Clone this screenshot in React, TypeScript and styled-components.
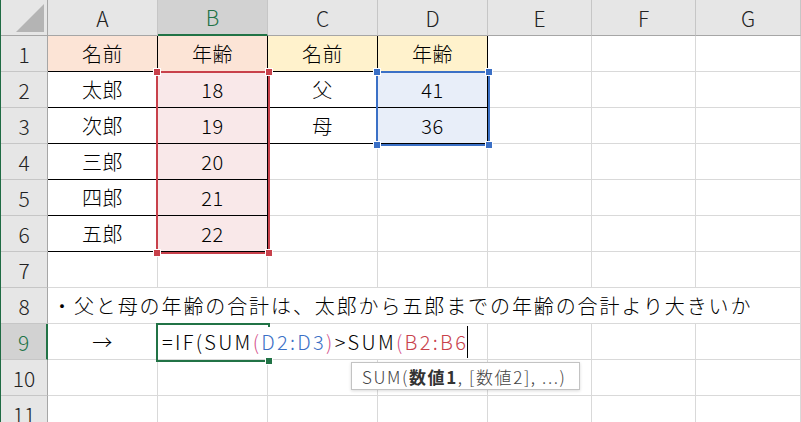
import React from 'react';
import styled, { createGlobalStyle, css } from 'styled-components';

const GREEN = '#217346';
const GRID = '#d9d9d9';
const RED = '#c8414b';
const BLUE = '#3b70c6';
const PAREN = '#d4508a';

const GlobalStyle = createGlobalStyle`
  html, body {
    margin: 0;
    padding: 0;
    background: #ffffff;
    overflow: hidden;
  }
  body {
    font-family: "Noto Sans CJK JP", "Noto Sans", sans-serif;
    font-weight: 300;
    color: #000;
  }
  * { box-sizing: border-box; }
`;

const Page = styled.div`
  position: relative;
  width: 801px;
  height: 422px;
  overflow: hidden;
  border-left: 1px solid #1f6b43;
`;

const Sheet = styled.div`
  display: grid;
  grid-template-columns: 47px 110px 110px 110px 110px 104px 104px 105px;
  grid-template-rows: repeat(12, 36px);
`;

// every item is placed on the grid by row / column so the overlays don't push cells around
type Place = { $r: number | string; $c: number | string };
const place = css<Place>`
  grid-row: ${(p) => p.$r};
  grid-column: ${(p) => p.$c};
`;

const Corner = styled.div`
  grid-column: 1;
  grid-row: 1;
  background: #e6e6e6;
  border-right: 1px solid #a6a6a6;
  border-bottom: 1px solid #a6a6a6;
`;

const ColHeader = styled.div<Place & { $active?: boolean }>`
  ${place}
  display: flex;
  align-items: center;
  justify-content: center;
  background: #e6e6e6;
  border-right: 1px solid #c6c6c6;
  border-bottom: 1px solid #a6a6a6;
  font-size: 21px;
  color: #222;
  ${(p) =>
    p.$active &&
    css`
      background: #d2d2d2;
      color: ${GREEN};
      border-bottom: 2px solid ${GREEN};
    `}
`;

const RowHeader = styled.div<Place & { $active?: boolean }>`
  ${place}
  display: flex;
  align-items: center;
  justify-content: center;
  background: #e6e6e6;
  border-right: 1px solid #a6a6a6;
  border-bottom: 1px solid #c6c6c6;
  font-size: 21px;
  color: #222;
  ${(p) =>
    p.$active &&
    css`
      background: #d2d2d2;
      color: ${GREEN};
      border-right: 2px solid ${GREEN};
    `}
`;

const Cell = styled.div<Place & { $fill?: string; $boxed?: boolean }>`
  ${place}
  display: flex;
  align-items: center;
  justify-content: center;
  font-size: 20px;
  letter-spacing: 0.5px;
  background: ${(p) => p.$fill || '#fff'};
  border-right: 1px solid ${(p) => (p.$boxed ? '#000' : GRID)};
  border-bottom: 1px solid ${(p) => (p.$boxed ? '#000' : GRID)};
  white-space: nowrap;
`;

const NoteCell = styled(Cell)`
  justify-content: flex-start;
  padding-left: 4px;
  letter-spacing: 1.9px;
`;

const EditCell = styled(Cell)`
  justify-content: flex-start;
  padding-left: 4px;
  letter-spacing: 2.3px;
`;

const Ref = styled.span<{ $color: string }>`
  color: ${(p) => p.$color};
`;

const Caret = styled.span`
  display: inline-block;
  width: 1px;
  height: 32px;
  margin-left: -1px;
  background: #000;
  vertical-align: middle;
`;

const RangeBox = styled.div<Place & { $color: string }>`
  ${place}
  margin: -1px -2px -2px -2px;
  border: 2px solid ${(p) => p.$color};
  position: relative;
  z-index: 2;
  pointer-events: none;
`;

const Handle = styled.span<{ $color: string; $top?: boolean; $left?: boolean }>`
  position: absolute;
  width: 6px;
  height: 6px;
  background: ${(p) => p.$color};
  box-shadow: 0 0 0 1px #fff;
  ${(p) => (p.$top ? 'top: -4px;' : 'bottom: -4px;')}
  ${(p) => (p.$left ? 'left: -4px;' : 'right: -4px;')}
`;

const ActiveBox = styled.div<Place>`
  ${place}
  margin: -1px -2px -2px -2px;
  border: 2px solid ${GREEN};
  border-right: none;
  position: relative;
  z-index: 4;
  pointer-events: none;
  &::after {
    content: '';
    position: absolute;
    right: 0;
    top: -2px;
    width: 2px;
    height: 4px;
    background: ${GREEN};
  }
`;

const FillHandle = styled.span`
  position: absolute;
  right: -2px;
  bottom: -4px;
  width: 6px;
  height: 6px;
  background: ${GREEN};
  box-shadow: 0 0 0 1px #fff;
`;

const Tooltip = styled.div`
  position: absolute;
  left: 350px;
  top: 362px;
  width: 229px;
  height: 28px;
  display: flex;
  align-items: center;
  padding-left: 10px;
  background: #fff;
  border: 1px solid #c3c3c3;
  box-shadow: 0 1px 3px rgba(0, 0, 0, 0.15);
  font-size: 17px;
  letter-spacing: 1.6px;
  color: #444;
  white-space: nowrap;
  z-index: 5;
`;

const Bold = styled.b`
  font-weight: 700;
  color: #333;
`;

type CellData = { text?: string; fill?: string; boxed?: boolean };

const PEACH = '#fce4d6';
const YELLOW = '#fff2cc';
const PINK = '#f9e8e9';
const LIGHTBLUE = '#e8eef9';

const cols = ['A', 'B', 'C', 'D', 'E', 'F', 'G'];

const rows: CellData[][] = [
  [
    { text: '名前', fill: PEACH, boxed: true },
    { text: '年齢', fill: PEACH, boxed: true },
    { text: '名前', fill: YELLOW, boxed: true },
    { text: '年齢', fill: YELLOW, boxed: true },
  ],
  [
    { text: '太郎', boxed: true },
    { text: '18', fill: PINK, boxed: true },
    { text: '父', boxed: true },
    { text: '41', fill: LIGHTBLUE, boxed: true },
  ],
  [
    { text: '次郎', boxed: true },
    { text: '19', fill: PINK, boxed: true },
    { text: '母', boxed: true },
    { text: '36', fill: LIGHTBLUE, boxed: true },
  ],
  [{ text: '三郎', boxed: true }, { text: '20', fill: PINK, boxed: true }],
  [{ text: '四郎', boxed: true }, { text: '21', fill: PINK, boxed: true }],
  [{ text: '五郎', boxed: true }, { text: '22', fill: PINK, boxed: true }],
  [],
];

const fillRow = (data: CellData[]) => cols.map((_, i) => data[i] || {});

const App = () => {
  return (
    <Page>
      <GlobalStyle />
      <Sheet>
        <Corner>
          <svg width="46" height="35" viewBox="0 0 46 35">
            <polygon points="15,32 43,32 43,4" fill="#b4b4b4" />
          </svg>
        </Corner>
        {cols.map((c, ci) => (
          <ColHeader key={c} $r={1} $c={ci + 2} $active={c === 'B'}>
            {c}
          </ColHeader>
        ))}

        {rows.map((r, ri) => (
          <React.Fragment key={ri}>
            <RowHeader $r={ri + 2} $c={1}>
              {ri + 1}
            </RowHeader>
            {fillRow(r).map((cell, ci) => (
              <Cell key={ci} $r={ri + 2} $c={ci + 2} $fill={cell.fill} $boxed={cell.boxed}>
                {cell.text}
              </Cell>
            ))}
          </React.Fragment>
        ))}

        <RowHeader $r={9} $c={1}>
          8
        </RowHeader>
        <NoteCell $r={9} $c="2 / 9">
          ・父と母の年齢の合計は、太郎から五郎までの年齢の合計より大きいか
        </NoteCell>

        <RowHeader $r={10} $c={1} $active>
          9
        </RowHeader>
        <Cell $r={10} $c={2}>
          →
        </Cell>
        <EditCell $r={10} $c="3 / 6">
          =IF(SUM<Ref $color={PAREN}>(</Ref>
          <Ref $color={BLUE}>D2:D3</Ref>
          <Ref $color={PAREN}>)</Ref>&gt;SUM<Ref $color={PAREN}>(</Ref>
          <Ref $color={RED}>B2:B6</Ref>
          <Caret />
        </EditCell>
        {[6, 7, 8].map((c) => (
          <Cell key={c} $r={10} $c={c} />
        ))}

        {[10, 11].map((n) => (
          <React.Fragment key={n}>
            <RowHeader $r={n + 1} $c={1}>
              {n}
            </RowHeader>
            {cols.map((c, ci) => (
              <Cell key={c} $r={n + 1} $c={ci + 2} />
            ))}
          </React.Fragment>
        ))}

        <RangeBox $color={RED} $c={3} $r="3 / 8">
          <Handle $color={RED} $top $left />
          <Handle $color={RED} $top />
          <Handle $color={RED} $left />
          <Handle $color={RED} />
        </RangeBox>
        <RangeBox $color={BLUE} $c={5} $r="3 / 5">
          <Handle $color={BLUE} $top $left />
          <Handle $color={BLUE} $top />
          <Handle $color={BLUE} $left />
          <Handle $color={BLUE} />
        </RangeBox>
        <ActiveBox $c={3} $r={10}>
          <FillHandle />
        </ActiveBox>
      </Sheet>
      <Tooltip>
        SUM(<Bold>数値1</Bold>, [数値2], ...)
      </Tooltip>
    </Page>
  );
};

export default App;
